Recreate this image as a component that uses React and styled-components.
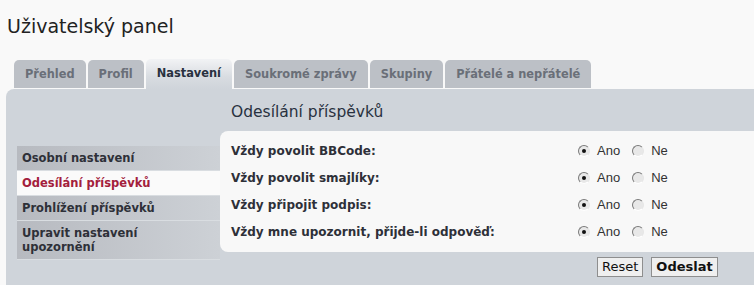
import React from "react";
import styled, { createGlobalStyle } from "styled-components";

const Global = createGlobalStyle`
  html, body { margin: 0; padding: 0; background: #f9f9f9; }
  body { font-family: "DejaVu Sans", Verdana, sans-serif; color: #28313f; }
`;

const Page = styled.div`
  width: 754px;
  height: 285px;
  overflow: hidden;
  display: flex;
  flex-direction: column;
`;

const Title = styled.h2`
  margin: 0;
  padding: 14px 0 0 7px;
  height: 60px;
  box-sizing: border-box;
  font-family: "DejaVu Sans", sans-serif;
  font-weight: normal;
  font-size: 19px;
  line-height: 24px;
  color: #222;
`;

const Tabs = styled.div`
  display: flex;
  align-items: flex-end;
  gap: 2px;
  padding-left: 14px;
  height: 28px;
  margin-bottom: 1px;
`;

const Tab = styled.div`
  box-sizing: border-box;
  height: ${(p) => (p.$active ? "30px" : "28px")};
  margin-bottom: ${(p) => (p.$active ? "-1px" : "0")};
  padding: 0 11px;
  display: flex;
  align-items: center;
  border-radius: 5px 5px 0 0;
  font-size: 11.4px;
  font-weight: bold;
  color: ${(p) => (p.$active ? "#28313f" : "#6a6f78")};
  background: ${(p) =>
    p.$active
      ? "linear-gradient(to bottom, #f2f3f5 0%, #d8dce1 60%, #cfd4da 100%)"
      : "#bcc0c6"};
  padding-bottom: ${(p) => (p.$active ? "2px" : "0")};
`;

const Panel = styled.div`
  flex: 1;
  margin-left: 6px;
  background: #cfd4da;
  border-radius: 8px 0 0 0;
  display: flex;
`;

const Sidebar = styled.div`
  width: 214px;
  box-sizing: border-box;
  padding: 57px 0 0 11px;
`;

const Menu = styled.ul`
  list-style: none;
  margin: 0;
  padding: 0;
`;

const MenuItem = styled.li`
  padding: 5px 5px;
  font-size: 11.5px;
  font-weight: bold;
  line-height: 14px;
  border-bottom: 1px solid #d9dde1;
  color: ${(p) => (p.$active ? "#a3203c" : "#2e3038")};
  background: ${(p) =>
    p.$active ? "#fafafa" : "linear-gradient(to right, #b7bac0, #cdd1d6)"};
`;

const Main = styled.div`
  flex: 1;
  display: flex;
  flex-direction: column;
`;

const Heading = styled.h3`
  margin: 0;
  height: 42px;
  padding: 3px 0 0 11px;
  box-sizing: border-box;
  display: flex;
  align-items: center;
  font-size: 15.5px;
  font-weight: normal;
  color: #28313f;
`;

const Box = styled.div`
  background: #f8f8f8;
  border-radius: 8px 0 0 8px;
  padding: 6px 0 7px 11px;
`;

const Row = styled.div`
  display: grid;
  grid-template-columns: 347px 1fr;
  align-items: center;
  height: 27px;
`;

const Label = styled.div`
  font-size: 12px;
  font-weight: bold;
  color: #2e3038;
`;

const Options = styled.div`
  display: flex;
  align-items: center;
`;

const Radio = styled.span`
  box-sizing: border-box;
  width: 12px;
  height: 12px;
  border-radius: 50%;
  border: 1px solid;
  border-color: #7a7a7a #e6e6e6 #ffffff #7a7a7a;
  background: #e8e8e8;
  display: inline-flex;
  align-items: center;
  justify-content: center;
  margin-right: 7px;
  &::after {
    content: "";
    width: 4px;
    height: 4px;
    border-radius: 50%;
    background: ${(p) => (p.$checked ? "#111" : "transparent")};
  }
`;

const OptText = styled.span`
  font-family: "Liberation Sans", Arial, sans-serif;
  font-size: 13px;
  color: #333;
  margin-right: 12px;
`;

const Buttons = styled.div`
  display: flex;
  gap: 8px;
  padding: 5px 0 0 377px;
`;

const Button = styled.button`
  font-family: "DejaVu Sans", sans-serif;
  font-size: 13px;
  font-weight: ${(p) => (p.$primary ? "bold" : "normal")};
  color: #111;
  background: #efefef;
  border: 1px solid #8e8e8e;
  padding: 1px 4px;
  height: 20px;
  line-height: 16px;
`;

const rows = [
  "Vždy povolit BBCode:",
  "Vždy povolit smajlíky:",
  "Vždy připojit podpis:",
  "Vždy mne upozornit, přijde-li odpověď:",
];

export default function App() {
  return (
    <Page>
      <Global />
      <Title>Uživatelský panel</Title>
      <Tabs>
        <Tab>Přehled</Tab>
        <Tab>Profil</Tab>
        <Tab $active>Nastavení</Tab>
        <Tab>Soukromé zprávy</Tab>
        <Tab>Skupiny</Tab>
        <Tab>Přátelé a nepřátelé</Tab>
      </Tabs>
      <Panel>
        <Sidebar>
          <Menu>
            <MenuItem>Osobní nastavení</MenuItem>
            <MenuItem $active>Odesílání příspěvků</MenuItem>
            <MenuItem>Prohlížení příspěvků</MenuItem>
            <MenuItem>
              Upravit nastavení
              <br />
              upozornění
            </MenuItem>
          </Menu>
        </Sidebar>
        <Main>
          <Heading>Odesílání příspěvků</Heading>
          <Box>
            {rows.map((r) => (
              <Row key={r}>
                <Label>{r}</Label>
                <Options>
                  <Radio $checked />
                  <OptText>Ano</OptText>
                  <Radio />
                  <OptText>Ne</OptText>
                </Options>
              </Row>
            ))}
          </Box>
          <Buttons>
            <Button>Reset</Button>
            <Button $primary>Odeslat</Button>
          </Buttons>
        </Main>
      </Panel>
    </Page>
  );
}
